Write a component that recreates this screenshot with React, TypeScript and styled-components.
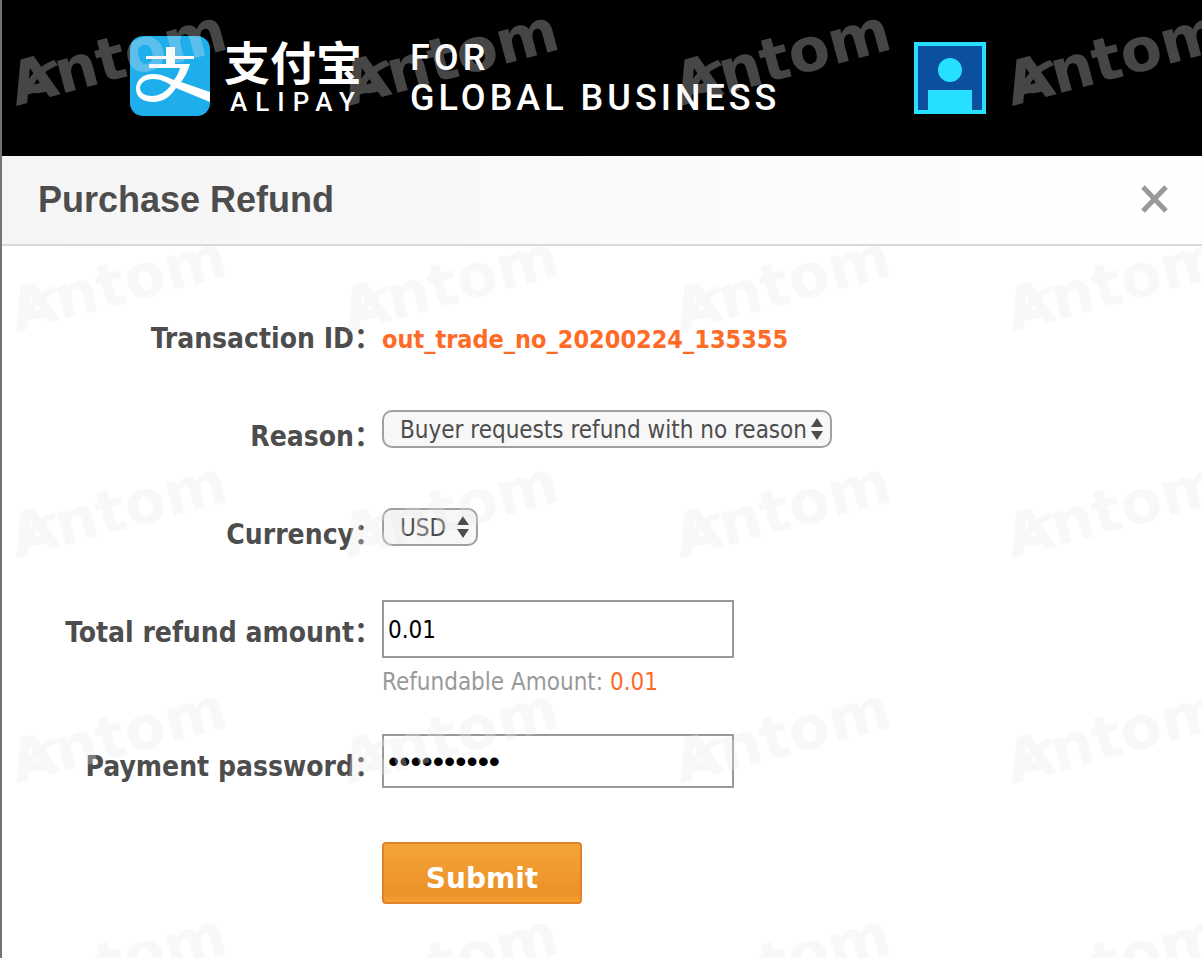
import React from 'react';
import styled, { createGlobalStyle } from 'styled-components';

const uiFont = '"DejaVu Sans Condensed", "DejaVu Sans", "Noto Sans CJK SC", sans-serif';

const GlobalStyle = createGlobalStyle`
  *, *::before, *::after { box-sizing: border-box; }
  body { margin: 0; background: #fff; color: #4d4d4d; font-family: ${uiFont}; }
`;

const Page = styled.div`
  position: relative;
  min-height: 100vh;
  overflow: hidden;
  border-left: 2px solid #737373;
`;

const Header = styled.header`
  display: flex;
  align-items: center;
  height: 156px;
  padding: 0 128px 4px;
  background: #000;
  color: #fff;
  font-family: Roboto, sans-serif;
`;

const Brand = styled.div`
  display: flex;
  flex-direction: column;
  gap: 8px;
  margin-left: 14px;
  padding-top: 4px;
  width: 144px;
`;

const BrandName = styled.span`
  font: 700 46px/40px "Noto Sans CJK SC", sans-serif;
`;

const BrandLatin = styled.span`
  padding-left: 6px;
  font-size: 26px;
  font-weight: 500;
  line-height: 28px;
  letter-spacing: 8px;
  white-space: nowrap;
`;

const Tagline = styled.p`
  flex: none;
  width: 374px;
  margin: 4px 0 0 42px;
  font-size: 36px;
  font-weight: 500;
  line-height: 40px;
  letter-spacing: 4px;
  white-space: nowrap;
`;

const Account = styled.button`
  display: flex;
  margin: 4px 0 0 130px;
  padding: 0;
  border: 0;
  background: none;
`;

const TitleBar = styled.div`
  display: flex;
  align-items: center;
  justify-content: space-between;
  height: 90px;
  padding: 0 32px 0 36px;
  border-bottom: 2px solid #d9d9d9;
  background: linear-gradient(90deg, #f5f5f5, #fff);
`;

const Title = styled.h1`
  margin: 0;
  font: 700 36px/40px "Liberation Sans", Arial, sans-serif;
`;

const CloseButton = styled.button`
  display: flex;
  padding: 0;
  border: 0;
  background: none;
`;

const Form = styled.form`
  display: flex;
  flex-direction: column;
  gap: 40px;
  padding: 60px 0 54px;
`;

const Row = styled.div`
  display: grid;
  grid-template-columns: 380px minmax(0, 1fr);
  align-items: start;
  min-height: 58px;
`;

const Label = styled.label`
  padding-top: 13px;
  font-size: 28px;
  font-weight: 700;
  line-height: 40px;
  text-align: right;
  white-space: nowrap;
`;

const TransactionId = styled.output`
  padding-top: 14px;
  color: #ff6b26;
  font-size: 25px;
  font-weight: 700;
  line-height: 40px;
`;

const SelectBox = styled.div<{ $width: number }>`
  position: relative;
  width: ${(p) => p.$width}px;
  margin-top: 6px;
`;

const Select = styled.select`
  appearance: none;
  display: block;
  width: 100%;
  height: 38px;
  padding: 2px 16px 0;
  border: 2px solid #a0a0a0;
  border-radius: 10px;
  background: #f7f7f7;
  color: #4d4d4d;
  font: 400 24px/32px ${uiFont};
`;

const SelectArrows = styled.svg`
  position: absolute;
  top: 8px;
  right: 9px;
  pointer-events: none;
`;

const TextInput = styled.input<{ $height: number }>`
  display: block;
  width: 352px;
  height: ${(p) => p.$height}px;
  padding: 2px 4px 0;
  border: 2px solid #999;
  background: #fff;
  color: #000;
  font: 400 24px ${uiFont};

  &[type='password'] {
    padding-top: 0;
    font: 400 32px "Liberation Sans", sans-serif;
  }
`;

const Hint = styled.p`
  margin: 8px 0 -4px;
  color: #999;
  font-size: 24px;
  line-height: 32px;

  strong {
    color: #ff6b26;
    font-weight: 400;
  }
`;

const SubmitButton = styled.button`
  grid-column: 2;
  width: 200px;
  height: 62px;
  margin-top: 10px;
  padding: 12px 0 0;
  border: 2px solid #e3822b;
  border-radius: 4px;
  background: linear-gradient(#f4a537, #ec9127 85%, #f4a031);
  color: #fff;
  font: 700 28px/36px "DejaVu Sans", sans-serif;
`;

const WatermarkLayer = styled.svg`
  position: absolute;
  top: 0;
  left: 0;
  width: 100%;
  height: 100%;
  pointer-events: none;
`;

function AlipayMark() {
  return (
    <svg width="80" height="80" viewBox="0 0 80 80" aria-hidden="true">
      <rect width="80" height="80" rx="13" fill="#1faeec" />
      <path
        d="M36 11h9v9h19v3H45v5h15c-2 7-5 13-9 18l29 10v10L46 52c-6 9-13 14-23 14C13 66 6 61 6 53c0-9 7-15 17-15 8 0 14 3 21 6 3-4 5-8 6-12H19v-4h17v-5H16v-3h20z"
        fill="#fff"
      />
      <path d="M41 49c-5-3-11-6-18-6-8 0-13 4-13 9s5 8 12 8 14-4 19-11z" fill="#1faeec" />
    </svg>
  );
}

function Arrows() {
  return (
    <SelectArrows width="12" height="22" viewBox="0 0 12 22" aria-hidden="true">
      <path d="M6 0l6 9H0zM6 22l6-9H0z" fill="#4d4d4d" />
    </SelectArrows>
  );
}

function Watermark() {
  return (
    <WatermarkLayer aria-hidden="true">
      <defs>
        <pattern id="antom" width="332" height="226" patternUnits="userSpaceOnUse">
          <g opacity="0.3" fill="#e8e8e8">
            <text
              transform="translate(14 106) rotate(-15)"
              fontFamily="DejaVu Sans, sans-serif"
              fontWeight="700"
              fontSize="60"
            >
              Antom
            </text>
            <path d="M52 60C36 66 23 80 24 88c1 7 14 6 26 2l-3-4c-8 2-14 3-15 0 0-5 8-14 24-21z" />
          </g>
        </pattern>
      </defs>
      <rect width="100%" height="100%" fill="url(#antom)" />
    </WatermarkLayer>
  );
}

export default function App() {
  return (
    <>
      <GlobalStyle />
      <Page>
        <Header>
          <AlipayMark />
          <Brand>
            <BrandName lang="zh-CN">支付宝</BrandName>
            <BrandLatin>ALIPAY</BrandLatin>
          </Brand>
          <Tagline>
            FOR
            <br />
            GLOBAL BUSINESS
          </Tagline>
          <Account type="button" aria-label="Account">
            <svg width="72" height="72" viewBox="0 0 72 72" aria-hidden="true">
              <path d="M0 0h72v72H0z" fill="#27dfff" />
              <path d="M4 4h64v64H58V48H14v20H4z" fill="#0b4f9f" />
              <circle cx="36" cy="28" r="12" fill="#27dfff" />
            </svg>
          </Account>
        </Header>
        <TitleBar>
          <Title>Purchase Refund</Title>
          <CloseButton type="button" aria-label="Close">
            <svg width="30" height="30" viewBox="0 0 30 30" aria-hidden="true">
              <path d="M3 2l23 24M26 2L3 26" stroke="#999" strokeWidth="5" />
            </svg>
          </CloseButton>
        </TitleBar>
        <Form onSubmit={(e) => e.preventDefault()}>
          <Row>
            <Label htmlFor="transaction">Transaction ID：</Label>
            <TransactionId id="transaction">out_trade_no_20200224_135355</TransactionId>
          </Row>
          <Row>
            <Label htmlFor="reason">Reason：</Label>
            <SelectBox $width={450}>
              <Select id="reason">
                <option>Buyer requests refund with no reason</option>
              </Select>
              <Arrows />
            </SelectBox>
          </Row>
          <Row>
            <Label htmlFor="currency">Currency：</Label>
            <SelectBox $width={96}>
              <Select id="currency">
                <option>USD</option>
              </Select>
              <Arrows />
            </SelectBox>
          </Row>
          <Row>
            <Label htmlFor="amount">Total refund amount：</Label>
            <div>
              <TextInput id="amount" $height={58} type="text" defaultValue="0.01" />
              <Hint>
                Refundable Amount: <strong>0.01</strong>
              </Hint>
            </div>
          </Row>
          <Row>
            <Label htmlFor="password">Payment password：</Label>
            <TextInput id="password" $height={54} type="password" defaultValue="0123456789" />
          </Row>
          <Row>
            <SubmitButton type="submit">Submit</SubmitButton>
          </Row>
        </Form>
        <Watermark />
      </Page>
    </>
  );
}
